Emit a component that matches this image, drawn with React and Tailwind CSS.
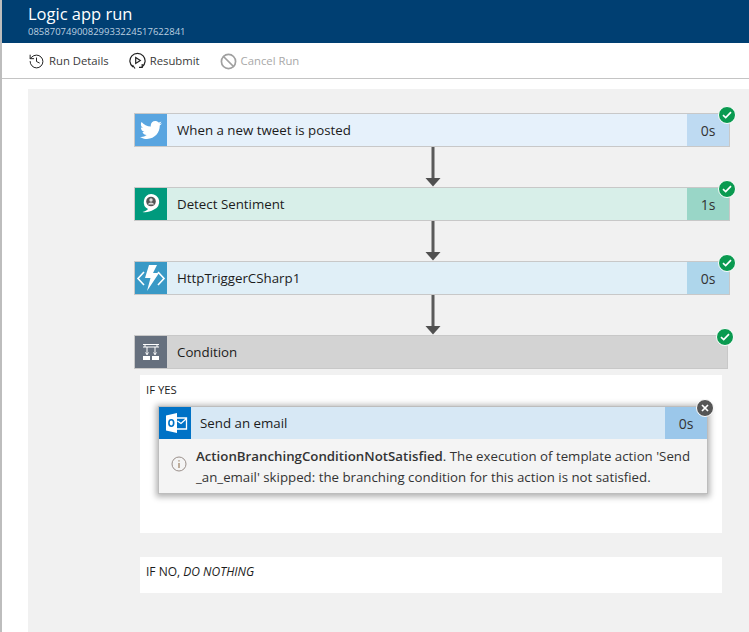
import React from "react";
import { FaTwitter } from "react-icons/fa";
import { History, Ban } from "lucide-react";

function Badge() {
  return (
    <div className="absolute right-[-7px] top-[-8px] w-4 h-4 rounded-full bg-[#0a9a50] border border-white flex items-center justify-center box-content">
      <svg width="10" height="8" viewBox="0 0 10 8"><path d="M1 4.2 L3.7 6.6 L9 1.2" stroke="#fff" strokeWidth="1.7" fill="none" /></svg>
    </div>
  );
}

function Arrow() {
  return (
    <div className="h-10 flex justify-center w-[598px]">
      <svg width="16" height="40" viewBox="0 0 16 40">
        <rect x="6.5" y="0" width="3" height="31" fill="#5a5a5a" />
        <path d="M0.5 31 H15.5 L8 39.5 Z" fill="#505050" />
      </svg>
    </div>
  );
}

function Card({ icon, iconBg, bg, timeBg, title, time }) {
  return (
    <div className={`relative flex h-[34px] w-[596px] border border-[#c8c8c8] ${bg}`}>
      <div className={`w-8 h-8 shrink-0 flex items-center justify-center ${iconBg}`}>{icon}</div>
      <div className="flex-1 pl-[10px] text-[13.3px] leading-[33px] text-[#1c1c1c]">{title}</div>
      <div className={`w-[42px] text-center text-[14px] leading-[33px] text-[#333] ${timeBg}`}>{time}</div>
      <Badge />
    </div>
  );
}

export default function App() {
  return (
    <div className="w-[749px] h-[632px] overflow-hidden bg-white border-l-2 border-[#bdbdbd] font-['Open_Sans','Liberation_Sans',sans-serif]">
      <div className="h-[43px] bg-[#003f72] -ml-[2px] pl-[28px] pt-[3px] text-white">
        <div className="text-[16.5px] leading-[22px]">Logic app run</div>
        <div className="text-[9.5px] leading-[13px] text-[#bcd0e0]">08587074900829933224517622841</div>
      </div>
      <div className="h-9 border-b border-[#c4c4c4] flex items-center pl-[26px] pt-[1px] text-[11.3px] text-[#3a3a3a]">
        <div className="flex items-center gap-[4px] mr-[20px]">
          <History size={17} strokeWidth={1.4} className="text-[#222]" />
          <span>Run Details</span>
        </div>
        <div className="flex items-center gap-[4px] mr-[20px]">
          <svg width="17" height="18" viewBox="0 0 17 18" fill="none" stroke="#222" strokeWidth="1.2">
            <path d="M4 15 A7.6 7.6 0 1 1 13 15" />
            <path d="M6.7 5.5 L11.3 8.5 L6.7 11.5 Z" />
            <path d="M13.2 12 V15.3 H10" />
            <path d="M3.5 13 L6 16.5" />
          </svg>
          <span>Resubmit</span>
        </div>
        <div className="flex items-center gap-[4px] text-[#a8a8a8]">
          <Ban size={17} strokeWidth={2.4} className="text-[#a0a0a0]" />
          <span>Cancel Run</span>
        </div>
      </div>
      <div className="mt-[10px] ml-[26px] h-[600px] bg-[#f1f1f1] pl-[106px] pt-6">
        <Card
          iconBg="bg-[#59a5e0]"
          bg="bg-[#e6f1fb]"
          timeBg="bg-[#bedaf2]"
          title="When a new tweet is posted"
          time="0s"
          icon={<FaTwitter size={22} color="#fff" />}
        />
        <Arrow />
        <Card
          iconBg="bg-[#009a7d]"
          bg="bg-[#d8efe9]"
          timeBg="bg-[#99d6c7]"
          title="Detect Sentiment"
          time="1s"
          icon={
            <svg width="32" height="32" viewBox="0 0 32 32">
              <path d="M16 6 A8 8 0 0 1 19 21.5 C15 24 11 24.6 7.5 24 C10 23.4 12 22.4 13 21 A8 8 0 0 1 16 6 Z" fill="#fff" />
              <circle cx="16" cy="13.5" r="4.8" fill="#555" />
              <circle cx="16" cy="12" r="1.7" fill="#ddd" />
              <path d="M13 16.5 C13.3 13.8 18.7 13.8 19 16.5 Z" fill="#ddd" />
            </svg>
          }
        />
        <Arrow />
        <Card
          iconBg="bg-[#3999c6]"
          bg="bg-[#e0eff7]"
          timeBg="bg-[#aed6eb]"
          title="HttpTriggerCSharp1"
          time="0s"
          icon={
            <svg width="32" height="32" viewBox="0 0 32 32" fill="none">
              <path d="M9 10 L3 16.5 L9 23" stroke="#fff" strokeWidth="1.6" />
              <path d="M23 10 L29 16.5 L23 23" stroke="#fff" strokeWidth="1.6" />
              <path d="M14 3 H22 L18 11 H24 L12 29 L15.5 16 H10 Z" fill="#fff" />
            </svg>
          }
        />
        <Arrow />
        <div className="relative flex h-[34px] w-[594px] border border-[#c8c8c8] bg-[#d3d3d3]">
          <div className="w-8 h-8 shrink-0 flex items-center justify-center bg-[#66707e]">
            <svg width="18" height="18" viewBox="0 0 18 18" fill="none" stroke="#fff">
              <path d="M1 1.5 H17 M3 1.5 V4 M15 1.5 V4 M1 4 H17 M5 4 V12 M13 4 V12" strokeWidth="1" />
              <path d="M3.5 9.5 L5 11.5 L6.5 9.5 M11.5 9.5 L13 11.5 L14.5 9.5" strokeWidth="1" />
              <rect x="1" y="13" width="7" height="4" fill="#fff" stroke="none" />
              <rect x="10" y="13" width="7" height="4" fill="#fff" stroke="none" />
            </svg>
          </div>
          <div className="flex-1 pl-[10px] text-[13.3px] leading-[33px] text-[#1c1c1c]">Condition</div>
          <Badge />
        </div>
        <div className="ml-[6px] mt-[6px] w-[582px] h-[158px] bg-white pt-[7px] pl-[6px]">
          <div className="text-[11.3px] leading-[15px] text-[#1c1c1c]">IF YES</div>
          <div className="relative ml-[12px] mt-[9px] w-[550px] h-[88px] border border-[#bdbdbd] bg-[#f4f4f4] shadow-[0_1px_6px_2px_rgba(0,0,0,0.3)]">
            <div className="flex h-8 bg-[#d7e8f5]">
              <div className="w-8 h-8 bg-[#0072c6]">
                <svg width="32" height="32" viewBox="0 0 32 32">
                  <path d="M7 8.5 L18 6 V26 L7 23.5 Z" fill="#fff" />
                  <ellipse cx="12.3" cy="16" rx="2.4" ry="3.2" fill="none" stroke="#0072c6" strokeWidth="1.6" />
                  <path d="M18 11 H27.5 V22 H18 M18.5 14 L22 16.5 L27.5 11.5" fill="none" stroke="#fff" strokeWidth="1.3" />
                </svg>
              </div>
              <div className="flex-1 pl-[9px] text-[13.3px] leading-[33px] text-[#1c1c1c]">Send an email</div>
              <div className="w-[42px] text-center text-[14px] leading-[33px] text-[#333] bg-[#9bc7ea]">0s</div>
            </div>
            <div className="flex pt-[7px]">
              <div className="w-[37px] pl-[12px] pt-[10px] shrink-0">
                <svg width="16" height="16" viewBox="0 0 16 16" fill="none">
                  <circle cx="8" cy="8" r="7" stroke="#9a8f8a" strokeWidth="1" />
                  <path d="M8 7 V12 M8 4.2 V5.4" stroke="#9a7f60" strokeWidth="1.2" />
                </svg>
              </div>
              <div className="text-[13.27px] leading-[21px] text-[#333] w-[505px]">
                <span className="font-semibold">ActionBranchingConditionNotSatisfied</span>. The execution of template action 'Send
                <br />_an_email' skipped: the branching condition for this action is not satisfied.
              </div>
            </div>
            <div className="absolute right-[-7px] top-[-8px] w-4 h-4 box-content rounded-full bg-[#555] border border-white flex items-center justify-center">
              <svg width="8" height="8" viewBox="0 0 8 8"><path d="M1 1 L7 7 M7 1 L1 7" stroke="#fff" strokeWidth="1.7" /></svg>
            </div>
          </div>
        </div>
        <div className="ml-[6px] mt-6 w-[582px] h-9 bg-white pl-[6px] text-[12px] leading-[30px] text-[#1c1c1c]">
          IF NO, <em>DO NOTHING</em>
        </div>
      </div>
    </div>
  );
}
